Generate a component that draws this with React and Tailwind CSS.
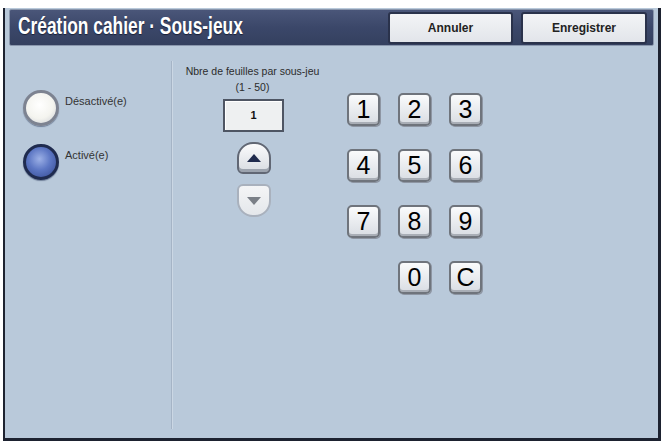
import React from "react";

const F = { fontFamily: '"Liberation Sans", Arial, sans-serif' };

function Key({ label }) {
  return (
    <div className="w-[33px] h-[33px] rounded-[5px] border-2 border-[#6f747c] bg-gradient-to-b from-[#fafbfc] to-[#d9dde3] shadow-[inset_0_-2px_0_#a9aeb6,1px_1px_0_#8e96a3] flex items-center justify-center text-[25px] leading-none text-black">
      {label}
    </div>
  );
}

function Radio({ on, label }) {
  return (
    <div className="flex items-start gap-[6px]">
      <div
        className={
          on
            ? "w-[36px] h-[36px] rounded-full border-[3px] border-[#1f2b4f] bg-[radial-gradient(circle_at_45%_40%,#9cb0e6_0%,#5d77c4_45%,#33488f_100%)] shadow-[0_1px_1px_#6f7f99]"
            : "w-[36px] h-[36px] rounded-full border-[3px] border-[#7d8391] bg-[radial-gradient(circle_at_45%_40%,#ffffff_0%,#f4f4ef_55%,#c9ccd2_100%)] shadow-[0_1px_1px_#6f7f99]"
        }
      />
      <span className="text-[11px] text-[#333] mt-[3px]">{label}</span>
    </div>
  );
}

export default function App() {
  return (
    <div className="w-[665px] h-[442px] bg-white pt-[8px] pl-[3px] overflow-hidden" style={F}>
      <div className="w-[658px] h-[433px] bg-[#b9c9da] border-l-2 border-r-[3px] border-b-[3px] border-[#1d2230] flex flex-col">
        {/* Title bar */}
        <div className="mt-[1px] mx-[4px] h-[37px] rounded-[2px] border border-[#8a97ad] bg-gradient-to-b from-[#4a5679] via-[#3b4769] to-[#34405f] flex items-center pl-[8px] pr-[4px]">
          <div className="flex-1">
            <span
              className="inline-block origin-left scale-x-[0.755] text-white font-bold text-[23px] leading-none whitespace-nowrap"
              style={{ textShadow: "0 1px 1px #1a2038" }}
            >
              Création cahier · Sous-jeux
            </span>
          </div>
          <div className="w-[125px] h-[32px] rounded-[3px] border-2 border-[#2a324b] bg-gradient-to-b from-[#f3f4f6] to-[#e2e5ea] flex items-center justify-center text-[12px] font-bold text-[#222] mr-[8px]">
            Annuler
          </div>
          <div className="w-[126px] h-[32px] rounded-[3px] border-2 border-[#2a324b] bg-gradient-to-b from-[#f3f4f6] to-[#e2e5ea] flex items-center justify-center text-[12px] font-bold text-[#222] mr-[2px]">
            Enregistrer
          </div>
        </div>

        {/* Content */}
        <div className="flex flex-1 min-h-0">
          {/* Left column */}
          <div className="w-[166px] flex flex-col gap-[18px] pl-[18px] pt-[44px]">
            <Radio on={false} label="Désactivé(e)" />
            <Radio on label="Activé(e)" />
          </div>
          <div className="w-[2px] mt-[15px] mb-[9px] bg-[#a5b4c6] border-r border-[#cbd7e4]" />

          {/* Counter */}
          <div className="w-[161px] flex flex-col items-center pt-[17px] text-[#2c2c2c]">
            <div className="text-[10.5px] leading-[16px] ml-[-2px]">Nbre de feuilles par sous-jeu</div>
            <div className="text-[10.5px] leading-[16px] ml-[-2px]">(1 - 50)</div>
            <div className="mt-[4px] w-[61px] h-[33px] border-2 border-[#4e5563] bg-[#eef0f1] shadow-[inset_1px_1px_0_#fff] flex items-center justify-center text-[11px] font-bold text-[#111]">
              1
            </div>
            <div className="mt-[10px] w-[34px] h-[32px] rounded-t-[16px] rounded-b-[6px] border-2 border-[#616774] bg-gradient-to-b from-[#fbfbfc] to-[#d8dce2] shadow-[inset_0_-3px_0_#9ca3ae] flex items-center justify-center">
              <svg width="14" height="8" viewBox="0 0 14 8"><polygon points="7,0 14,8 0,8" fill="#1f2a4d" /></svg>
            </div>
            <div className="mt-[10px] w-[34px] h-[33px] rounded-b-[16px] rounded-t-[6px] border-2 border-[#a9b1bd] bg-gradient-to-b from-[#f4f5f6] to-[#e4e7eb] flex items-center justify-center">
              <svg width="14" height="8" viewBox="0 0 14 8"><polygon points="0,0 14,0 7,8" fill="#7a7f87" /></svg>
            </div>
          </div>

          {/* Keypad */}
          <div className="pt-[47px] pl-[13px]">
            <div className="grid grid-cols-[33px_33px_33px] gap-x-[18px] gap-y-[23px]">
              {["1", "2", "3", "4", "5", "6", "7", "8", "9"].map((k) => (
                <Key key={k} label={k} />
              ))}
              <div />
              <Key label="0" />
              <Key label="C" />
            </div>
          </div>
        </div>
      </div>
    </div>
  );
}
